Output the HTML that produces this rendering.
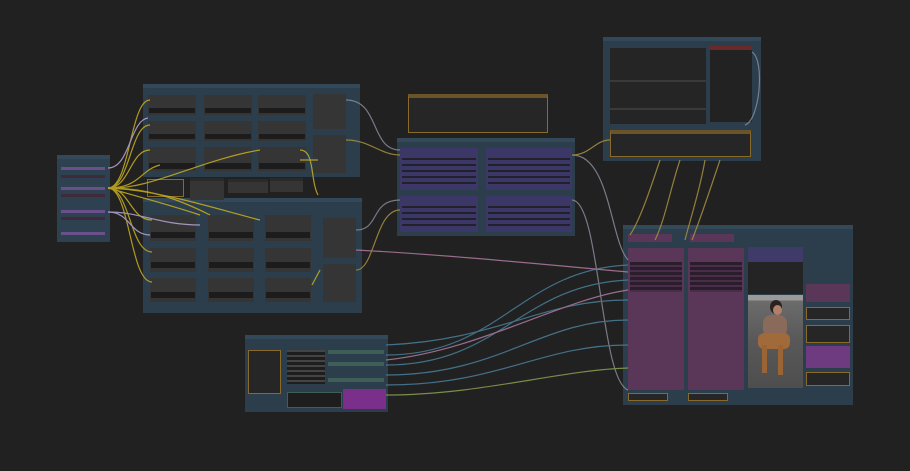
<!DOCTYPE html>
<html><head><meta charset="utf-8"><style>
*{margin:0;padding:0;box-sizing:border-box}
body{width:910px;height:471px;background:#212121;overflow:hidden;position:relative;font-family:"Liberation Sans",sans-serif}
div{position:absolute}
.g{background:#2c3e4c;border-top:4px solid #33495a}
.n{background:#353535;border-top:3px solid #2a2a2a}
.p{background:#5a3658}
.b{background:#3b3868}
.o{border:1.5px solid #8a6a2a;background:#262626}
svg{position:absolute;left:0;top:0}
</style></head><body>

<div class="g" style="left:57px;top:155px;width:53px;height:87px;background:#2e4150"></div>
<div style="left:61px;top:167px;width:44px;height:3px;background:#6a4f8a"></div>
<div style="left:61px;top:175px;width:44px;height:3px;background:#402a3a"></div>
<div style="left:61px;top:187px;width:44px;height:3px;background:#6a4f8a"></div>
<div style="left:61px;top:194px;width:44px;height:3px;background:#402a3a"></div>
<div style="left:61px;top:210px;width:44px;height:3px;background:#6a4f8a"></div>
<div style="left:61px;top:217px;width:44px;height:3px;background:#402a3a"></div>
<div style="left:61px;top:232px;width:44px;height:3px;background:#6a4f8a"></div>

<div class="g" style="left:143px;top:84px;width:217px;height:93px"></div>
<div class="g" style="left:143px;top:198px;width:219px;height:115px"></div>

<div class="o" style="left:147px;top:179px;width:37px;height:18px"></div>
<div class="n" style="left:190px;top:178px;width:34px;height:22px"></div>
<div class="n" style="left:228px;top:179px;width:40px;height:14px"></div>
<div class="n" style="left:270px;top:178px;width:33px;height:14px"></div>

<div class="o" style="left:408px;top:94px;width:140px;height:39px;border-top:4px solid #6b5428"></div>

<div class="g" style="left:397px;top:138px;width:178px;height:98px"></div>
<div class="b" style="left:400px;top:148px;width:78px;height:42px"></div>
<div class="b" style="left:486px;top:148px;width:86px;height:42px"></div>
<div class="b" style="left:400px;top:196px;width:78px;height:36px"></div>
<div class="b" style="left:486px;top:196px;width:86px;height:36px"></div>

<div class="g" style="left:603px;top:37px;width:158px;height:124px"></div>
<div style="left:610px;top:48px;width:96px;height:76px;background:#252525"></div>
<div style="left:610px;top:80px;width:96px;height:2px;background:#3a3a3a"></div>
<div style="left:610px;top:108px;width:96px;height:2px;background:#3a3a3a"></div>
<div style="left:710px;top:46px;width:42px;height:76px;background:#222;border-top:4px solid #6a2a2a"></div>
<div class="o" style="left:610px;top:130px;width:141px;height:27px;border-top:4px solid #6b5428"></div>

<div class="g" style="left:623px;top:225px;width:230px;height:180px"></div>
<div class="p" style="left:628px;top:234px;width:44px;height:8px"></div>
<div class="p" style="left:690px;top:234px;width:44px;height:8px"></div>
<div class="p" style="left:628px;top:248px;width:56px;height:142px"></div>
<div class="p" style="left:688px;top:248px;width:56px;height:142px"></div>
<div style="left:630px;top:262px;width:52px;height:30px;background:repeating-linear-gradient(#2a1d2c 0 3px,#4a2d49 3px 5px)"></div>
<div style="left:690px;top:262px;width:52px;height:30px;background:repeating-linear-gradient(#2a1d2c 0 3px,#4a2d49 3px 5px)"></div>
<div style="left:748px;top:247px;width:55px;height:15px;background:#3e3a6a"></div>
<div style="left:748px;top:262px;width:55px;height:32px;background:#242424"></div>
<div style="left:748px;top:295px;width:55px;height:93px;background:linear-gradient(#9a9a9a 0 6%,#6c6c6c 6%,#585858 50%,#4e4e4e);overflow:hidden">
 <div style="left:22px;top:5px;width:12px;height:14px;border-radius:50%;background:#2a2220"></div>
 <div style="left:25px;top:10px;width:9px;height:10px;border-radius:50%;background:#b0806a"></div>
 <div style="left:15px;top:20px;width:24px;height:22px;border-radius:8px;background:#8a6a5a"></div>
 <div style="left:10px;top:38px;width:32px;height:16px;border-radius:6px;background:#a06a3a"></div>
 <div style="left:14px;top:50px;width:5px;height:28px;background:#9a6434"></div>
 <div style="left:30px;top:50px;width:5px;height:30px;background:#9a6434"></div>
</div>
<div class="p" style="left:806px;top:284px;width:44px;height:18px"></div>
<div class="o" style="left:806px;top:307px;width:44px;height:13px"></div>
<div class="o" style="left:806px;top:325px;width:44px;height:18px"></div>
<div class="p" style="left:806px;top:346px;width:44px;height:22px;background:#6e3a80"></div>
<div class="o" style="left:806px;top:372px;width:44px;height:14px"></div>
<div class="o" style="left:628px;top:393px;width:40px;height:8px"></div>
<div class="o" style="left:688px;top:393px;width:40px;height:8px"></div>

<div class="g" style="left:245px;top:335px;width:143px;height:77px"></div>
<div class="o" style="left:248px;top:350px;width:33px;height:44px"></div>
<div style="left:287px;top:350px;width:38px;height:34px;background:repeating-linear-gradient(#444 0 2px,#1e1e1e 2px 5px)"></div>
<div style="left:328px;top:350px;width:56px;height:4px;background:#3e5e58"></div>
<div style="left:328px;top:362px;width:56px;height:4px;background:#3e5e58"></div>
<div style="left:328px;top:378px;width:56px;height:4px;background:#3e5e58"></div>
<div style="left:287px;top:392px;width:55px;height:16px;background:#1e1e1e;border:1px solid #3e5e58"></div>
<div style="left:343px;top:389px;width:43px;height:20px;background:#7a2f8a"></div>

<svg width="910" height="471">
<g fill="#353535">
<rect x="148" y="95" width="48" height="20"/><rect x="204" y="95" width="48" height="20"/><rect x="258" y="95" width="48" height="20"/>
<rect x="148" y="121" width="48" height="20"/><rect x="204" y="121" width="48" height="20"/><rect x="258" y="121" width="48" height="20"/>
<rect x="148" y="147" width="48" height="24"/><rect x="204" y="147" width="48" height="24"/><rect x="258" y="147" width="48" height="24"/>
<rect x="313" y="94" width="33" height="35"/><rect x="313" y="135" width="33" height="38"/>
<rect x="150" y="215" width="46" height="26"/><rect x="208" y="215" width="46" height="26"/><rect x="265" y="215" width="46" height="26"/>
<rect x="150" y="248" width="46" height="24"/><rect x="208" y="248" width="46" height="24"/><rect x="265" y="248" width="46" height="24"/>
<rect x="150" y="278" width="46" height="24"/><rect x="208" y="278" width="46" height="24"/><rect x="265" y="278" width="46" height="24"/>
<rect x="323" y="218" width="33" height="40"/><rect x="323" y="264" width="33" height="38"/>
</g>
<g fill="#1c1c1c">
<rect x="149" y="108" width="46" height="5"/><rect x="205" y="108" width="46" height="5"/><rect x="259" y="108" width="46" height="5"/>
<rect x="149" y="134" width="46" height="5"/><rect x="205" y="134" width="46" height="5"/><rect x="259" y="134" width="46" height="5"/>
<rect x="149" y="163" width="46" height="6"/><rect x="205" y="163" width="46" height="6"/><rect x="259" y="163" width="46" height="6"/>
<rect x="151" y="232" width="44" height="6"/><rect x="209" y="232" width="44" height="6"/><rect x="266" y="232" width="44" height="6"/>
<rect x="151" y="262" width="44" height="6"/><rect x="209" y="262" width="44" height="6"/><rect x="266" y="262" width="44" height="6"/>
<rect x="151" y="292" width="44" height="6"/><rect x="209" y="292" width="44" height="6"/><rect x="266" y="292" width="44" height="6"/>
<g opacity=".8">
<rect x="402" y="158" width="74" height="2"/><rect x="402" y="164" width="74" height="2"/><rect x="402" y="170" width="74" height="2"/><rect x="402" y="176" width="74" height="2"/><rect x="402" y="182" width="74" height="2"/>
<rect x="488" y="158" width="82" height="2"/><rect x="488" y="164" width="82" height="2"/><rect x="488" y="170" width="82" height="2"/><rect x="488" y="176" width="82" height="2"/><rect x="488" y="182" width="82" height="2"/>
<rect x="402" y="206" width="74" height="2"/><rect x="402" y="212" width="74" height="2"/><rect x="402" y="218" width="74" height="2"/><rect x="402" y="224" width="74" height="2"/>
<rect x="488" y="206" width="82" height="2"/><rect x="488" y="212" width="82" height="2"/><rect x="488" y="218" width="82" height="2"/><rect x="488" y="224" width="82" height="2"/>
</g>
</g>
<g fill="none" stroke-width="1.2" opacity=".85">
<g stroke="#c9b020">
<path d="M108 188 C130 188 130 100 150 100"/><path d="M108 188 C130 188 130 125 150 125"/><path d="M108 188 C130 188 130 150 150 150"/>
<path d="M108 188 C130 188 130 220 152 220"/><path d="M108 188 C130 188 130 252 152 252"/><path d="M108 188 C130 188 130 282 152 282"/>
<path d="M108 188 C150 188 180 200 210 215"/><path d="M108 188 C150 190 200 160 260 150"/><path d="M108 188 C160 190 220 210 260 220"/>
<path d="M108 188 C140 188 140 170 160 165"/><path d="M108 188 C150 200 170 205 200 215"/>
<path d="M300 150 C315 150 310 180 318 195"/><path d="M300 160 L318 160"/><path d="M320 270 L312 285"/>
</g>
<g stroke="#b8a7d8">
<path d="M108 168 C130 168 130 120 148 118"/><path d="M108 212 C130 212 130 235 150 235"/><path d="M108 212 C140 212 160 225 200 225"/>
</g>
<g stroke="#8a8a9a">
<path d="M346 100 C380 100 370 150 400 150"/><path d="M356 230 C380 230 370 200 400 200"/>
<path d="M572 155 C610 155 610 240 628 260"/><path d="M572 200 C600 200 600 380 628 390"/>
<path d="M752 52 C765 60 760 120 745 125"/>
</g>
<g stroke="#a89040">
<path d="M346 140 C370 140 380 155 400 155"/><path d="M356 270 C375 270 375 210 400 210"/>
<path d="M572 155 C590 155 595 140 610 140"/>
<path d="M660 160 C650 190 640 220 630 235"/><path d="M680 160 C670 190 665 220 655 240"/><path d="M705 160 C700 190 690 220 685 240"/><path d="M720 160 C710 190 700 220 692 240"/>
</g>
<g stroke="#4a7f9a">
<path d="M386 355 C500 355 520 270 628 265"/><path d="M386 365 C500 365 520 285 628 280"/><path d="M386 345 C500 340 540 300 628 300"/>
<path d="M386 375 C500 375 540 320 628 320"/><path d="M386 385 C500 385 540 345 628 345"/>
</g>
<g stroke="#b07aa0"><path d="M356 250 C450 255 550 265 628 272"/><path d="M386 360 C480 350 560 300 628 290"/></g>
<g stroke="#8aa050"><path d="M386 395 C480 395 560 370 628 368"/></g>
</g>
</svg>
</body></html>
